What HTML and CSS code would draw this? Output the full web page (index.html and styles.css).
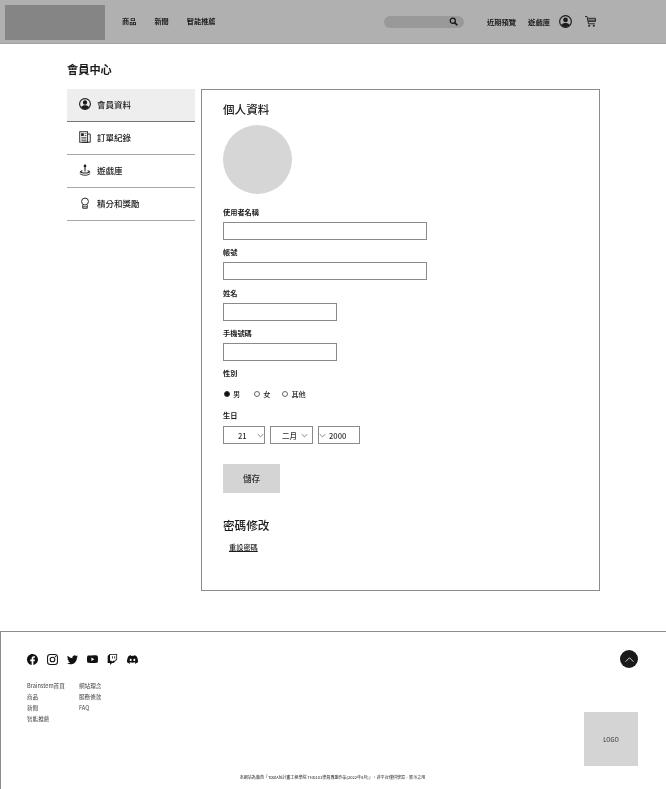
FILE: index.html
```html
<!DOCTYPE html>
<html lang="zh-Hant">
<head>
<meta charset="utf-8">
<title>會員中心</title>
<link rel="stylesheet" href="styles.css">
</head>
<body>
<svg class="defs" width="0" height="0" aria-hidden="true">
  <symbol id="user" viewBox="0 0 16 16">
    <circle cx="8" cy="8" r="7.2" fill="none" stroke="currentColor" stroke-width="1.5"/>
    <circle cx="8" cy="6" r="2.9" fill="currentColor"/>
    <path d="M2.6 12.4C4 10.3 5.8 9.8 8 9.8s4 .5 5.4 2.6A7 7 0 0 1 8 15a7 7 0 0 1-5.4-2.6z" fill="currentColor"/>
  </symbol>
  <symbol id="chev" viewBox="0 0 10 6">
    <path d="M1 1l4 4 4-4" fill="none" stroke="currentColor" stroke-width="1"/>
  </symbol>
</svg>

<div class="sheet">
<header class="topbar">
  <div class="brand"></div>
  <nav class="mainnav">
    <a>商品</a><a>新聞</a><a>智能推薦</a>
  </nav>
  <div class="search">
    <svg class="search-icon" viewBox="0 0 12 12"><circle cx="5" cy="5" r="3.4" fill="none" stroke="currentColor" stroke-width="1.6"/><path d="M7.5 7.5l3.6 3.6" stroke="currentColor" stroke-width="2"/></svg>
  </div>
  <nav class="usernav">
    <a class="recent">近期預覽</a><a class="lib">遊戲庫</a>
    <svg class="nav-user"><use href="#user"/></svg>
    <svg class="cart" viewBox="0 0 12 13"><path d="M0 1h2.2l1.6 8h7M3 3h8.5v3.4H3.4M3.4 5h8" fill="none" stroke="currentColor" stroke-width="1"/><circle cx="4.6" cy="11.2" r="1.1" fill="currentColor"/><circle cx="9.6" cy="11.2" r="1.1" fill="currentColor"/></svg>
  </nav>
</header>

<main class="page">
  <h1 class="page-title">會員中心</h1>
  <div class="columns">
    <aside class="sidemenu">
      <a class="side-item active">
        <svg class="side-icon"><use href="#user"/></svg>會員資料
      </a>
      <a class="side-item">
        <svg class="side-icon" viewBox="0 0 16 16"><rect x="1" y="1" width="10.5" height="14" fill="none" stroke="currentColor" stroke-width="1.2"/><path d="M11.5 4H15v11H4" fill="none" stroke="currentColor" stroke-width="1.2"/><rect x="2.8" y="3" width="3.6" height="3.6" fill="currentColor"/><path d="M7.5 3.5h2.5M7.5 6h2.5M3 8.5h7M3 10.5h7M3 12.5h7" stroke="currentColor" stroke-width=".9"/></svg>訂單紀錄
      </a>
      <a class="side-item">
        <svg class="side-icon" viewBox="0 0 16 16"><circle cx="8" cy="2.6" r="1.8" fill="currentColor"/><path d="M8 3v7" stroke="currentColor" stroke-width="1.4"/><path d="M4.6 8.2c-2 .4-3.4 1.2-3.4 2.2 0 1.300 3 2.400 6.800 2.400s6.800-1.100 6.800-2.400c0-1-1.400-1.800-3.400-2.200v1.400c.9.200 1.500.500 1.500.800 0 .500-2.200 1-4.900 1s-4.900-.500-4.900-1c0-.300.600-.600 1.500-.800z" fill="currentColor"/><path d="M1 12.400C2.500 14.200 5 15 8 15s5.500-.800 7-2.600" fill="none" stroke="currentColor" stroke-width="1.200"/></svg>遊戲庫
      </a>
      <a class="side-item">
        <svg class="side-icon" viewBox="0 0 16 16"><circle cx="8" cy="6" r="4.600" fill="none" stroke="currentColor" stroke-width="1.200"/><path d="M5 10.500V15h6v-4.500" fill="none" stroke="currentColor" stroke-width="1.200"/><path d="M5 13h6" stroke="currentColor" stroke-width="1"/></svg>積分和獎勵
      </a>
    </aside>

    <section class="panel">
      <h2 class="panel-title">個人資料</h2>
      <div class="avatar"></div>

      <label class="field-label first">使用者名稱</label>
      <input class="text-input wide" type="text">
      <label class="field-label">帳號</label>
      <input class="text-input wide" type="text">
      <label class="field-label gap9">姓名</label>
      <input class="text-input narrow" type="text">
      <label class="field-label">手機號碼</label>
      <input class="text-input narrow" type="text">
      <label class="field-label">性別</label>

      <div class="radios">
        <span class="radio on"></span><span class="radio-text r1">男</span>
        <span class="radio"></span><span class="radio-text r2">女</span>
        <span class="radio"></span><span class="radio-text">其他</span>
      </div>

      <label class="field-label birth">生日</label>
      <div class="selects">
        <div class="select day"><span>21</span><svg class="chev"><use href="#chev"/></svg></div>
        <div class="select month"><span>二月</span><svg class="chev"><use href="#chev"/></svg></div>
        <div class="select year"><svg class="chev"><use href="#chev"/></svg><span>2000</span></div>
      </div>

      <button class="save" type="button">儲存</button>

      <h2 class="panel-title second">密碼修改</h2>
      <a class="reset">重設密碼</a>
    </section>
  </div>
</main>

<footer class="site-footer">
  <div class="foot-top">
    <div class="socials">
      <svg class="social" viewBox="0 0 16 16"><path d="M16 8.049c0-4.446-3.582-8.05-8-8.05C3.58 0-.002 3.603-.002 8.05c0 4.017 2.926 7.347 6.75 7.951v-5.625h-2.03V8.05H6.75V6.275c0-2.017 1.195-3.131 3.022-3.131.876 0 1.791.157 1.791.157v1.98h-1.009c-.993 0-1.303.621-1.303 1.258v1.51h2.218l-.354 2.326H9.25V16c3.824-.604 6.75-3.934 6.75-7.951z"/></svg>
      <svg class="social" viewBox="0 0 16 16"><rect x=".8" y=".8" width="14.400" height="14.400" rx="4" fill="none" stroke="currentColor" stroke-width="1.500"/><circle cx="8" cy="8" r="3.400" fill="none" stroke="currentColor" stroke-width="1.500"/><circle cx="12.200" cy="3.800" r="1" fill="currentColor"/></svg>
      <svg class="social" viewBox="0 0 16 16"><path d="M5.026 15c6.038 0 9.341-5.003 9.341-9.334 0-.14 0-.282-.006-.422A6.685 6.685 0 0 0 16 3.542a6.658 6.658 0 0 1-1.889.518 3.301 3.301 0 0 0 1.447-1.817 6.533 6.533 0 0 1-2.087.793A3.286 3.286 0 0 0 7.875 6.03a9.325 9.325 0 0 1-6.767-3.429 3.289 3.289 0 0 0 1.018 4.382A3.323 3.323 0 0 1 .64 6.575v.045a3.288 3.288 0 0 0 2.632 3.218 3.203 3.203 0 0 1-.865.115 3.23 3.23 0 0 1-.614-.057 3.283 3.283 0 0 0 3.067 2.277A6.588 6.588 0 0 1 .78 13.58a6.32 6.32 0 0 1-.78-.045A9.344 9.344 0 0 0 5.026 15z"/></svg>
      <svg class="social" viewBox="0 0 16 16"><path d="M8.051 1.999h.089c.822.003 4.987.033 6.11.335a2.01 2.01 0 0 1 1.415 1.42c.101.38.172.883.22 1.402l.01.104.022.26.008.104c.065.914.073 1.77.074 1.957v.075c-.001.194-.01 1.108-.082 2.06l-.008.105-.009.104c-.05.572-.124 1.14-.235 1.558a2.007 2.007 0 0 1-1.415 1.42c-1.16.312-5.569.334-6.18.335h-.142c-.309 0-1.587-.006-2.927-.052l-.17-.006-.087-.004-.171-.007-.171-.007c-1.11-.049-2.167-.128-2.654-.26a2.007 2.007 0 0 1-1.415-1.419c-.111-.417-.185-.986-.235-1.558L.09 9.82l-.008-.104A31.4 31.4 0 0 1 0 7.68v-.123c.002-.215.01-.958.064-1.778l.007-.103.003-.052.008-.104.022-.26.01-.104c.048-.519.119-1.023.22-1.402a2.007 2.007 0 0 1 1.415-1.42c.487-.13 1.544-.21 2.654-.26l.17-.007.172-.006.086-.003.171-.007A99.788 99.788 0 0 1 7.858 2h.193zM6.4 5.209v4.818l4.157-2.408L6.4 5.209z"/></svg>
      <svg class="social" viewBox="0 0 16 16"><path fill-rule="evenodd" d="M3.857 0 1 2.857v10.286h3.429V16l2.857-2.857H9.570L14.714 8V0H3.857zm9.714 7.429-2.285 2.285H9l-2 2v-2H4.429V1.143h9.142v6.286z"/><path d="M11.857 3.143h-1.143V6.570h1.143V3.143zm-3.143 0H7.571V6.570h1.143V3.143z"/></svg>
      <svg class="social" viewBox="0 0 16 16"><path d="M13.545 2.907a13.227 13.227 0 0 0-3.257-1.011.05.05 0 0 0-.052.025c-.141.25-.297.577-.406.833a12.19 12.19 0 0 0-3.658 0 8.258 8.258 0 0 0-.412-.833.051.051 0 0 0-.052-.025c-1.125.194-2.22.534-3.257 1.011a.041.041 0 0 0-.021.018C.356 6.024-.213 9.047.066 12.032c.001.014.01.028.021.037a13.276 13.276 0 0 0 3.995 2.02.05.05 0 0 0 .056-.019c.308-.42.582-.863.818-1.329a.05.05 0 0 0-.01-.059.051.051 0 0 0-.018-.011 8.875 8.875 0 0 1-1.248-.595.05.05 0 0 1-.02-.066.051.051 0 0 1 .015-.019c.084-.063.168-.129.248-.195a.05.05 0 0 1 .051-.007c2.619 1.196 5.454 1.196 8.041 0a.052.052 0 0 1 .053.007c.08.066.164.132.248.195a.051.051 0 0 1-.004.085 8.254 8.254 0 0 1-1.249.594.05.05 0 0 0-.03.03.052.052 0 0 0 .003.041c.24.465.515.909.817 1.329a.05.05 0 0 0 .056.019 13.235 13.235 0 0 0 4.001-2.02.049.049 0 0 0 .021-.037c.334-3.451-.559-6.449-2.366-9.106a.034.034 0 0 0-.02-.019zm-8.198 7.307c-.789 0-1.438-.724-1.438-1.612 0-.889.637-1.613 1.438-1.613.807 0 1.45.73 1.438 1.613 0 .888-.637 1.612-1.438 1.612zm5.316 0c-.788 0-1.438-.724-1.438-1.612 0-.889.637-1.613 1.438-1.613.807 0 1.451.73 1.438 1.613 0 .888-.631 1.612-1.438 1.612z"/></svg>
    </div>
    <button class="to-top" type="button" aria-label="回到頂部"><svg viewBox="0 0 12 8"><path d="M1.500 6.500L6 2l4.500 4.500" fill="none" stroke="currentColor" stroke-width="1"/></svg></button>
  </div>
  <div class="foot-mid">
    <ul class="foot-links col-a">
      <li>Brainstem首頁</li><li>商品</li><li>新聞</li><li>智能推薦</li>
    </ul>
    <ul class="foot-links">
      <li>網站理念</li><li>服務條款</li><li>FAQ</li>
    </ul>
    <div class="foot-logo">LOGO</div>
  </div>
  <p class="copyright">本網站為教育「ToolAhi計畫工程學院 THD101學員專題作品(2022年8月)」，非平台僅供學習、展示之用</p>
</footer>
</div>
</body>
</html>
```

FILE: styles.css
```css
* { box-sizing: border-box; }
html, body { margin: 0; padding: 0; }
body {
  width: 666px;
  height: 789px;
  overflow: hidden;
  background: #fff;
  color: #1c1c1c;
  font-family: "Noto Sans CJK TC", "Noto Sans", sans-serif;
}
.sheet { filter: grayscale(1) blur(0.35px); background: #fff; height: 789px; }
.defs { position: absolute; }
svg { display: block; }
a { color: inherit; }

/* top bar */
.topbar {
  height: 44px;
  background: #b0b0b0;
  border-bottom: 1px solid #a0a0a0;
  display: flex;
  align-items: center;
  padding: 0 70px 0 5px;
}
.brand { width: 100px; height: 35px; background: #858585; margin-top: 1px; }
.mainnav {
  display: flex;
  gap: 18px;
  margin-left: 17px;
  margin-top: -1px;
  font-size: 7.2px;
  font-weight: 700;
}
.search {
  width: 80px;
  height: 12px;
  margin-left: auto;
  border-radius: 6px;
  background: #999;
  display: flex;
  align-items: center;
  justify-content: flex-end;
  padding-right: 6px;
}
.search-icon { width: 9px; height: 9px; color: #111; }
.usernav {
  display: flex;
  align-items: center;
  margin-left: 23px;
  font-size: 7.3px;
  font-weight: 700;
}
.lib { margin-left: 12px; }
.nav-user { width: 13px; height: 13px; margin-left: 9px; }
.cart { width: 11px; height: 13px; margin-left: 13px; }

/* main */
.page { padding-left: 67px; margin-bottom: 40px; }
.page-title {
  margin: 16px 0 11px;
  font-size: 11.2px;
  line-height: 18px;
  font-weight: 700;
}
.columns { display: flex; gap: 6px; align-items: flex-start; }

.sidemenu { width: 128px; }
.side-item {
  height: 33px;
  display: flex;
  align-items: center;
  gap: 6px;
  padding-left: 12px;
  padding-bottom: 2px;
  font-size: 8.5px;
  font-weight: 500;
  border-bottom: 1px solid #a8a8a8;
}
.side-item.active { background: #eee; border-bottom: 1px solid #777; }
.side-icon { width: 12px; height: 12px; flex: none; }

.panel {
  width: 399px;
  height: 502px;
  border: 1px solid #8c8c8c;
  padding: 11px 0 0 21px;
}
.panel-title {
  margin: 0;
  font-size: 11.6px;
  line-height: 16px;
  font-weight: 500;
}
.panel-title.second { margin-top: 24px; }
.avatar { width: 69px; height: 69px; margin-top: 8px; border-radius: 50%; background: #d6d6d6; }

.field-label {
  display: block;
  margin: 7px 0 5px;
  font-size: 7.2px;
  line-height: 10px;
  font-weight: 700;
}
.field-label.first { margin-top: 13px; }
.field-label.gap9 { margin-top: 8px; }
.field-label.birth { margin: 10px 0 6px; }

.text-input {
  display: block;
  height: 18px;
  padding: 0;
  border: 1px solid #8a8a8a;
  border-radius: 0;
  background: #fff;
}
.text-input.wide { width: 204px; }
.text-input.narrow { width: 114px; }

.radios {
  display: flex;
  align-items: center;
  height: 12px;
  margin: 10px 0 0 1px;
  font-size: 7.2px;
  font-weight: 500;
}
.radio {
  width: 6px;
  height: 6px;
  margin-right: 3px;
  border: 1px solid #666;
  border-radius: 50%;
  background: #fff;
}
.radio.on { background: #111; border-color: #333; }
.radio-text.r1 { margin-right: 14px; }
.radio-text.r2 { margin-right: 12px; }

.selects { display: flex; gap: 5px; }
.select {
  height: 18px;
  display: flex;
  align-items: center;
  border: 1px solid #8a8a8a;
  font-size: 7.6px;
  font-weight: 500;
  color: #333;
}
.select.day { width: 42px; padding-left: 14px; }
.select.month { width: 43px; padding-left: 11px; }
.select.year { width: 42px; padding-left: 0; }
.chev { width: 7px; height: 5px; color: #555; }
.select.day .chev { margin-left: 10px; }
.select.month .chev { margin-left: 4px; }
.select.year .chev { margin: 0 3px 0 0; }

.save {
  display: block;
  width: 57px;
  height: 29px;
  margin-top: 20px;
  padding: 0;
  border: 0;
  background: #d4d4d4;
  color: #333;
  font: 500 8.6px/1 "Noto Sans CJK TC", sans-serif;
}
.reset {
  display: block;
  width: max-content;
  margin: 9px 0 0 6px;
  font-size: 7.2px;
  line-height: 10px;
  font-weight: 500;
  text-decoration: underline;
}

/* footer */
.site-footer {
  height: 158px;
  border-top: 1px solid #8c8c8c;
  border-left: 1px solid #8c8c8c;
  padding: 18px 28px 0 26px;
}
.foot-top { display: flex; align-items: center; justify-content: space-between; height: 18px; }
.socials { display: flex; gap: 9px; }
.social { width: 11px; height: 11px; fill: #111; color: #111; }
.to-top {
  width: 18px;
  height: 18px;
  padding: 0;
  border: 0;
  border-radius: 50%;
  background: #1a1a1a;
  color: #eee;
  display: flex;
  align-items: center;
  justify-content: center;
}
.to-top svg { width: 11px; height: 7px; }

.foot-mid { display: flex; align-items: flex-start; margin-top: 13px; }
.foot-links {
  list-style: none;
  margin: 0;
  padding: 0;
  font-size: 5.6px;
  line-height: 11px;
  color: #444;
}
.foot-links.col-a { width: 52px; }
.foot-logo {
  width: 54px;
  height: 54px;
  margin: 31px 0 0 auto;
  background: #d4d4d4;
  display: flex;
  align-items: center;
  justify-content: center;
  font-size: 5.8px;
  color: #222;
}
.copyright {
  margin: 7px 0 0;
  text-align: center;
  font-size: 4.05px;
  line-height: 8px;
  color: #222;
  white-space: nowrap;
}
```
